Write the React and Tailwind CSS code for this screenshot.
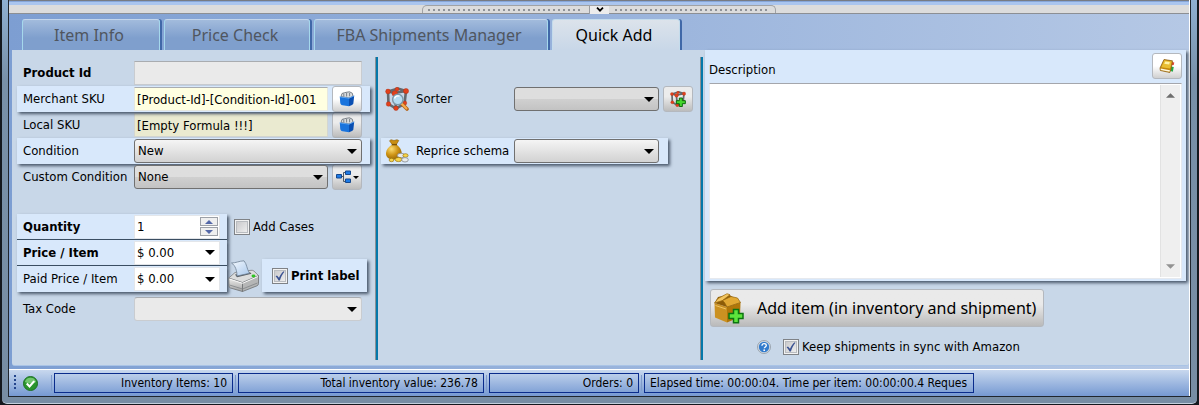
import React, { useState } from "react";

const glow = "bg-[#d8e8fb] shadow-[2px_2px_3px_rgba(40,55,75,0.8)]";
const raised =
  "flex h-[26px] w-[30px] shrink-0 items-center justify-center rounded-[3px] border border-[#b4b8be]";
const raisedDim = raised + " bg-linear-to-b from-[#ececec] from-40% to-[#bcbcbc]";
const raisedLit = raised + " bg-linear-to-b from-white from-50% to-[#d0d0d0]";

function Arrow({ className }) {
  return (
    <svg viewBox="0 0 10 5" className={"h-[5px] w-[10px] " + className} aria-hidden="true">
      <path d="M0 0h10L5 5z" fill="#000" />
    </svg>
  );
}

function Combo({ id, label, value, lit, flat, className }) {
  const skin = flat
    ? "border-[#c9ccd0] border-t-[#a9acb0] bg-[#eaeaea]"
    : lit
      ? "border-[#707070] bg-linear-to-b from-[#f5f5f5] to-[#d2d2d2]"
      : "border-[#707070] bg-linear-to-b from-[#dedede] from-50% via-[#d0d0d0] via-50% to-[#c3c3c3]";
  return (
    <div className={"relative shrink-0 " + className}>
      <select
        id={id}
        aria-label={label}
        className={"block h-6 w-full appearance-none rounded-[3px] border pl-[3px] pr-6 pb-px outline-none " + skin}
      >
        <option>{value}</option>
      </select>
      <Arrow className="pointer-events-none absolute top-[10px] right-[5px]" />
    </div>
  );
}

function Check({ label, checked, bold }) {
  const [on, setOn] = useState(checked);
  return (
    <label className={"flex items-center gap-[3px] whitespace-nowrap " + (bold ? "font-bold" : "")}>
      <span className="relative block size-4">
        <input
          type="checkbox"
          checked={on}
          onChange={(e) => setOn(e.target.checked)}
          className="block size-4 appearance-none border border-[#7f8286] bg-linear-to-br from-[#c4c4c6] to-[#f4f4f4] shadow-[inset_0_0_0_1px_#f2f2f2,inset_0_0_0_2px_#b9bcc0]"
        />
        {on && (
          <svg viewBox="0 0 16 16" className="pointer-events-none absolute top-0 left-0 size-4" aria-hidden="true">
            <path d="M3.6 8.2 5 7.4l2 2.4c1-2.700 2.600-5 4.700-6.600l.7.5C10.300 6.400 9 9 7.900 12.600H6.500C5.700 10.700 4.800 9.300 3.600 8.200z" fill="#3a5292" />
          </svg>
        )}
      </span>
      {label}
    </label>
  );
}

function Bucket() {
  return (
    <svg viewBox="0 0 16 16" className="size-4" aria-hidden="true">
      <path d="M2 5.500 3 2.500l2.500-.8L8 1.200l2.500-.4 2.800 1.400L14 5.500 10 7z" fill="#d9dcdf" stroke="#6f767e" strokeWidth=".9" />
      <path d="M4.800 2.500v3M7.600 2v3.500M10.600 1.800v3.500" stroke="#6f767e" strokeWidth=".9" />
      <path d="M.8 5.800 10 7.200v8L3.500 14.300C2 14 1.300 13 1.200 11.500z" fill="#1a74dd" />
      <path d="m10 7.200 5.200-2.400-.8 7.200c-.1 1-.5 1.500-1.400 1.900L10 15.200z" fill="#0a4fb2" />
      <path d="M.8 5.800 10 7.200l5.200-2.400" fill="none" stroke="#5aa4f2" strokeWidth=".9" />
    </svg>
  );
}

function Molecule({ plus, className }) {
  return (
    <svg viewBox="0 0 24 24" className={className} aria-hidden="true">
      <path d="M3 4.500 9.500 6 21 4l-1.500 13L11 21.500 3.500 17zM3 4.500l10-3 8 2.500M9.500 6 11 21" fill="none" stroke="#64696f" strokeWidth="2.600" />
      <g fill="#e2401c" stroke="#a62c10" strokeWidth=".4">
        <circle cx="3" cy="4.500" r="2.400" />
        <circle cx="12" cy="2.300" r="2" />
        <circle cx="9.800" cy="6.500" r="2.800" />
        <circle cx="21" cy="4" r="2.600" />
        <circle cx="3.500" cy="17" r="2.300" />
        <circle cx="11" cy="21.300" r="2.300" />
        <circle cx="19.800" cy="16" r="2" />
      </g>
      {plus ? (
        <path d="M14 10.500h4.500v4H23V19h-4.500v4.300H14V19H9.500v-4.500H14z" fill="#44d62c" stroke="#0b6a0b" strokeWidth="1.500" />
      ) : (
        <>
          <path d="m16.500 16.500 5.500 5.500" stroke="#b3641c" strokeWidth="3.600" strokeLinecap="round" />
          <path d="m16.500 16.500 5 5" stroke="#f7ac4e" strokeWidth="2" strokeLinecap="round" />
          <circle cx="12.800" cy="12.500" r="5.200" fill="#b5dcf2" stroke="#7d97a8" strokeWidth="1.400" />
          <path d="M9.500 11.500c.6-2 2.600-3 5-2.400" fill="none" stroke="#fff" strokeWidth="1.400" />
        </>
      )}
    </svg>
  );
}

function MoneyBag() {
  return (
    <svg viewBox="0 0 24 24" className="size-6 shrink-0" aria-hidden="true">
      <defs>
        <radialGradient id="bag" cx=".35" cy=".3" r=".8">
          <stop offset="0" stopColor="#fbdc72" />
          <stop offset=".5" stopColor="#cf9516" />
          <stop offset="1" stopColor="#8a5c05" />
        </radialGradient>
      </defs>
      <path d="M6 .7 9 1.500l3-.8 1.800.8-2.600 4.200H7.400L4.500 1.800z" fill="#c98e12" stroke="#8a5c05" strokeWidth=".6" />
      <path d="M7.300 5.500h4.200c4 3 6.200 7.400 4.800 11.300-1 3-4.300 4-7.500 3.800C3.500 20.500.8 18 1 14c.2-3.400 2.800-6.500 6.300-8.500z" fill="url(#bag)" />
      <path d="M6.800 5.600h5.200" stroke="#7b5204" strokeWidth="1.400" />
      <ellipse cx="16" cy="16.500" rx="3.600" ry="2.300" fill="#e9ebec" stroke="#84898d" strokeWidth=".8" />
      <ellipse cx="20.500" cy="16.500" rx="2.600" ry="1.800" fill="#f6d54b" stroke="#9c7307" strokeWidth=".7" />
      <ellipse cx="13.500" cy="20.500" rx="3.400" ry="2.100" fill="#f6d54b" stroke="#9c7307" strokeWidth=".7" />
      <ellipse cx="20" cy="20.800" rx="3.300" ry="2.200" fill="#e9ebec" stroke="#84898d" strokeWidth=".8" />
      <ellipse cx="6.500" cy="21" rx="2.400" ry="1.700" fill="#f6d54b" stroke="#9c7307" strokeWidth=".7" />
    </svg>
  );
}

function Printer() {
  return (
    <svg viewBox="0 0 32 32" className="size-8 shrink-0" aria-hidden="true">
      <defs>
        <linearGradient id="shell" x1="0" y1="0" x2="0" y2="1">
          <stop offset="0" stopColor="#ededec" />
          <stop offset="1" stopColor="#a3a3a3" />
        </linearGradient>
        <linearGradient id="sheet" x1="0" y1="0" x2="1" y2="1">
          <stop offset="0" stopColor="#f4f9fe" />
          <stop offset="1" stopColor="#a9c8ec" />
        </linearGradient>
      </defs>
      <path d="M.8 18 14.500 22.500V31.500L2.500 28Q1 27.500 1 26z" fill="url(#shell)" stroke="#6d7072" strokeWidth=".8" />
      <path d="m14.500 22.500 16-7v8q0 1.600-1.500 2.300L14.500 31.500z" fill="#b5b6b6" stroke="#6d7072" strokeWidth=".8" />
      <path d="M.8 18 7 12.500l16-2.200q2-.2 3 .8l4.500 4.400-16 7z" fill="#dcdddd" stroke="#7c7f81" strokeWidth=".8" />
      <path d="m7 14.500 15-2.200 1.500 1.500-14.500 3.400z" fill="#54585c" />
      <path d="M3.500 3C8 3 11 1 16 .8c3 3.500 2.500 7.500 5.500 12.500L9 16C9 11 7.500 5.500 3.500 3z" fill="url(#sheet)" stroke="#6f8296" strokeWidth=".8" />
      <path d="m1.500 25 13 4 15-6" fill="none" stroke="#86898b" strokeWidth=".9" />
      <path d="m1.500 19 13 4.300L30 16.500" fill="none" stroke="#fafafa" strokeWidth="1" />
      <ellipse cx="25.500" cy="16" rx="2" ry="1.400" fill="#2fc522" />
    </svg>
  );
}

function Parcel() {
  return (
    <svg viewBox="0 0 32 32" className="size-8 shrink-0" aria-hidden="true">
      <path d="M1.500 11 14 15v15.500L2 25.500z" fill="#cb9121" />
      <path d="m14 15 13.500-4.500-.5 14.500L14 30.500z" fill="#b07609" />
      <path d="m1.500 11 3.500-6 11-2.500 11.500 8L14 15z" fill="#8d5c07" />
      <path d="m5 6.500 9-4.800 3 1L9.500 8.500 1.500 11z" fill="#f3c55e" stroke="#9b6a10" strokeWidth=".7" />
      <path d="m9.500 8.500 8.500-4 6.500 1.500 3 4.500L14 15l-2.500-4.500z" fill="#e1a833" stroke="#93640c" strokeWidth=".7" />
      <path d="m2.500 13.500 10.500 3.500" stroke="#f0c566" strokeWidth="1" />
      <path d="M20.500 17.500h5v4h4.500v5h-4.500v4.300h-5v-4.300H16v-5h4.500z" fill="#5de43c" stroke="#0c7410" strokeWidth="1.500" />
    </svg>
  );
}

function Book() {
  return (
    <svg viewBox="0 0 16 16" className="size-4" aria-hidden="true">
      <path d="m13 4 2.300.6-.6 2.400-2 .2z" fill="#df4732" />
      <path d="m12 8.500 2.800.6-1 4.700-2.300-.9z" fill="#24a745" />
      <path d="M5 1.500 13.500 2.800 12 11 10.800 14.500 1.300 12.500 1 10z" fill="#c4880c" stroke="#86580b" strokeWidth=".7" />
      <path d="M5.300 2.300 12.700 3.400l-1.600 7L2.300 9.200z" fill="#e9be32" />
      <path d="m6.300 3.400 4.500.6-.6 2.400-5-.6z" fill="#fff2a8" />
      <path d="M1.600 10.600 11 12.200l-.5 1.500-8.700-1.600z" fill="#fff8de" />
    </svg>
  );
}

function Nodes() {
  return (
    <svg viewBox="0 0 16 14" className="h-[14px] w-4" aria-hidden="true">
      <path d="M5 6.500h3M7.500 2.500v9M7.500 2.500H10M7.500 11.500H10" fill="none" stroke="#4d5865" strokeWidth="1" />
      <g fill="#1e7be6" stroke="#15498f" strokeWidth="1">
        <path d="M.5 4.500h5v3.500h-5zM9.500 1h5v3.500h-5zM9.500 9h5v3.500h-5z" />
      </g>
    </svg>
  );
}

function Row({ id, label, lit, bold, ruled, wide = true, children }) {
  return (
    <div
      className={
        "flex h-[26px] items-center pl-[6px] " +
        (wide ? "w-[353px] " : "w-[210px] ") +
        (ruled ? "border-b border-[#3c5064] " : "") +
        (lit ? "relative " + glow : "")
      }
    >
      <label htmlFor={id} className={"w-[111px] shrink-0 whitespace-nowrap " + (bold ? "font-bold" : "")}>
        {label}
      </label>
      {children}
    </div>
  );
}

function MoneyBox({ id, label }) {
  return (
    <div className="flex h-6 w-[86px] items-center border border-[#e3e6ea] bg-white pr-[4px]">
      <input id={id} defaultValue="$ 0.00" className="w-full min-w-0 bg-transparent pl-[2px] outline-none" />
      <button type="button" aria-label={label} className="flex h-5 items-center">
        <Arrow className="" />
      </button>
    </div>
  );
}

function Divider() {
  return <div className="w-[3px] shrink-0 self-stretch border-l border-[#8b9095] bg-[#0478aa]" />;
}

const tabs = [
  ["Item Info", "w-[138px]"],
  ["Price Check", "w-[146px]"],
  ["FBA Shipments Manager", "w-[234px]"],
  ["Quick Add", "w-[128px]"],
];

const stats = [
  ["Inventory Items: 10", "w-[179px] justify-end"],
  ["Total inventory value: 236.78", "w-[246px] justify-end"],
  ["Orders: 0", "w-[150px] justify-end"],
  ["Elapsed time: 00:00:04. Time per item: 00:00:00.4 Reques", "w-[330px]"],
];

function Dots() {
  return <span className="h-[2px] flex-1 bg-[repeating-linear-gradient(90deg,#8e9298_0_2px,transparent_2px_5px)]" />;
}

export default function App() {
  const [tab, setTab] = useState("Quick Add");
  return (
    <div className="bg-[#14181e] px-[2px] pb-px font-['DejaVu_Sans_Condensed','DejaVu_Sans',sans-serif] text-[13px] leading-4 text-black">
      <div className="rounded-b-[5px] border-b border-[#c3d0dd] bg-linear-to-b from-[#8fb0d2] via-[#7890a8] via-20% to-[#778da4] px-[6px] pb-[6px]">
        <div className="border-x border-b border-[#20262e]">
          <div className="border-r border-white bg-linear-to-r from-[#7d9ed2] to-[#b5c8e5]">
            <div className="flex h-[5px] flex-col border-t border-[#777b83] bg-[#86a6d9]">
              <div className="mt-px h-[3px] bg-[#aac5ee]" />
            </div>
            <div className="flex h-[9px] justify-center border-b border-[#8c8f94] bg-[#dcdcdc]">
              <div className="flex h-2 w-[354px] items-center gap-[6px] rounded-t-[5px] border border-b-0 border-[#a0a2a5] px-[5px]">
                <Dots />
                <button type="button" aria-label="Collapse panel" className="flex h-2 w-5 items-center justify-center border-l border-[#9a9ca0] bg-[#ececec]">
                  <svg viewBox="0 0 8 5" className="h-[5px] w-2" aria-hidden="true">
                    <path d="m1 .7 3 3 3-3" fill="none" stroke="#000" strokeWidth="1.700" />
                  </svg>
                </button>
                <Dots />
              </div>
            </div>

            <div className="pb-[3px] pl-[3px]">
              <div role="tablist" className="flex gap-1 pt-[5px] pl-[10px] font-['Noto_Sans',sans-serif] text-[16px]">
                {tabs.map(([name, width]) => (
                  <button
                    key={name}
                    type="button"
                    role="tab"
                    aria-selected={tab === name}
                    onClick={() => setTab(name)}
                    className={
                      "h-[31px] rounded-t-[3px] border-x border-t pr-1 whitespace-nowrap shadow-[2px_0_0_#4068a8] " +
                      width +
                      (tab === name
                        ? " border-[#c4dcec] bg-linear-to-b from-[#dce3eb] to-[#c8d7e8] text-black"
                        : " border-[#a5d8ec] border-t-[#c4d6ec] bg-linear-to-b from-[#a2bbdc] to-[#7f9fcd] to-60% text-[#50565f]")
                    }
                  >
                    {name}
                  </button>
                ))}
              </div>

              <main className="flex rounded-b-[3px] border-b border-[#a9c3e6] bg-[#c8d7e8] pb-[5px]">
                <form className="w-[363px] shrink-0 pt-[10px] pl-[5px]" onSubmit={(e) => e.preventDefault()}>
                  <Row id="pid" label="Product Id" bold>
                    <input id="pid" className="h-6 w-[228px] border border-[#c9ccd0] border-t-[#a9acb0] bg-[#eaeaea] px-[3px]" />
                  </Row>
                  <Row id="msku" label="Merchant SKU" lit>
                    <input id="msku" defaultValue="[Product-Id]-[Condition-Id]-001" className="mr-1 h-6 w-[194px] border border-[#e5e7e0] border-t-[#a9acb0] bg-[#ffffe1] px-[2px]" />
                    <button type="button" aria-label="Merchant SKU formula" className={raisedLit}><Bucket /></button>
                  </Row>
                  <Row id="lsku" label="Local SKU">
                    <input id="lsku" defaultValue="[Empty Formula !!!]" className="mr-1 h-6 w-[194px] border border-[#d4d6d0] bg-[#eaead0] px-[2px]" />
                    <button type="button" aria-label="Local SKU formula" className={raisedDim}><Bucket /></button>
                  </Row>
                  <Row id="cond" label="Condition" lit>
                    <Combo id="cond" value="New" lit className="w-[228px]" />
                  </Row>
                  <Row id="ccond" label="Custom Condition">
                    <Combo id="ccond" value="None" className="mr-1 w-[194px]" />
                    <button type="button" aria-label="Condition tree" className={raisedDim}>
                      <Nodes />
                      <svg viewBox="0 0 6 3" className="ml-px h-[3px] w-[6px]" aria-hidden="true"><path d="M0 0h6L3 3z" /></svg>
                    </button>
                  </Row>

                  <div className="mt-6 flex">
                    <div className="w-[210px] shrink-0">
                      <Row id="qty" label="Quantity" lit bold ruled wide={false}>
                        <div className="flex h-6 w-[86px] items-center border border-[#e3e6ea] bg-white">
                          <input id="qty" defaultValue="1" className="w-full min-w-0 bg-transparent pl-[2px] outline-none" />
                          <div className="flex shrink-0 flex-col gap-px pr-px">
                            <button type="button" aria-label="More" className="flex h-[9px] w-[18px] items-center justify-center border border-[#9da1a8] bg-[#efefef]">
                              <svg viewBox="0 0 8 4" className="h-1 w-2"><path d="m4 0 4 4H0z" fill="#5468a8" /></svg>
                            </button>
                            <button type="button" aria-label="Less" className="flex h-[9px] w-[18px] items-center justify-center border border-[#9da1a8] bg-[#efefef]">
                              <svg viewBox="0 0 8 4" className="h-1 w-2"><path d="M0 0h8L4 4z" fill="#5468a8" /></svg>
                            </button>
                          </div>
                        </div>
                      </Row>
                      <Row id="price" label="Price / Item" lit bold ruled wide={false}>
                        <MoneyBox id="price" label="Price list" />
                      </Row>
                      <Row id="paid" label="Paid Price / Item" lit wide={false}>
                        <MoneyBox id="paid" label="Paid price list" />
                      </Row>
                    </div>
                    <div className="flex flex-1 flex-col justify-between pt-[5px]">
                      <div className="pl-[7px]"><Check label="Add Cases" checked={false} /></div>
                      <div className="relative flex items-center gap-[2px] pl-px">
                        <Printer />
                        <div className={"flex h-[33px] w-[105px] items-center pl-[10px] " + glow}>
                          <Check label="Print label" checked bold />
                        </div>
                      </div>
                    </div>
                  </div>
                  <div className="mt-1">
                    <Row id="tax" label="Tax Code">
                      <Combo id="tax" value="" flat className="w-[228px]" />
                    </Row>
                  </div>
                </form>

                <div className="flex pt-[7px]"><Divider /></div>

                <section className="flex w-[322px] shrink-0 flex-col gap-[26px] pt-9 pl-[3px]">
                  <div className="flex h-[26px] items-center pl-1">
                    <Molecule className="mr-[7px] size-6 shrink-0" />
                    <label htmlFor="sorter" className="w-[98px]">Sorter</label>
                    <Combo id="sorter" value="" className="w-[145px]" />
                    <button type="button" aria-label="Add sorter" className={raisedDim + " ml-1"}>
                      <Molecule plus className="size-4" />
                    </button>
                  </div>
                  <div className={"flex h-[26px] w-[287px] items-center pl-1 " + glow}>
                    <span className="mr-[7px] flex"><MoneyBag /></span>
                    <label htmlFor="schema" className="w-[98px] whitespace-nowrap">Reprice schema</label>
                    <Combo id="schema" value="" lit className="w-[145px]" />
                  </div>
                </section>

                <div className="flex pt-[7px]"><Divider /></div>

                <section className="min-w-0 flex-1 pr-[3px] pl-[2px]">
                  <div className={"flex h-[231px] flex-col px-1 pt-[3px] pb-[2px] " + glow}>
                    <div className="flex items-center justify-between pb-1">
                      <label htmlFor="desc" className="pt-2">Description</label>
                      <button type="button" aria-label="Description notes" className={raisedLit}><Book /></button>
                    </div>
                    <div className="flex flex-1 border border-[#e6e9ee] border-t-[#a4a6ac] bg-white p-px">
                      <textarea id="desc" className="min-w-0 flex-1 resize-none bg-white p-1 outline-none" />
                      <div className="flex w-5 flex-col items-center justify-between border-l border-[#e2e2e2] bg-[#efefef] py-2">
                        <button type="button" aria-label="Scroll up"><svg viewBox="0 0 8 4" className="block h-[5px] w-[9px]"><path d="m4 0 4 4H0z" fill="#6e6e6e" /></svg></button>
                        <button type="button" aria-label="Scroll down"><svg viewBox="0 0 8 4" className="block h-[5px] w-[9px]"><path d="M0 0h8L4 4z" fill="#929292" /></svg></button>
                      </div>
                    </div>
                  </div>
                  <button type="button" className="mt-2 ml-[5px] flex h-[38px] w-[334px] items-center gap-3 rounded-[3px] border border-[#b4b8be] bg-linear-to-b from-[#eaeaea] from-40% to-[#bababa] pl-[2px] font-['Noto_Sans',sans-serif] text-[16px] whitespace-nowrap">
                    <Parcel />
                    Add item (in inventory and shipment)
                  </button>
                  <div className="mt-3 flex items-center gap-3 pb-[5px] pl-[52px]">
                    <svg viewBox="0 0 14 14" className="size-[14px]" role="img" aria-label="Help">
                      <circle cx="7" cy="7" r="6.500" fill="#d7dde4" stroke="#8d979f" strokeWidth=".8" />
                      <circle cx="7" cy="7" r="5.200" fill="#337ccd" />
                      <path d="M4.900 5.700c0-1.400 1-2.100 2.200-2.100s2.200.7 2.200 1.800c0 1.500-2 1.500-2 2.900" fill="none" stroke="#fff" strokeWidth="1.300" />
                      <circle cx="7.200" cy="10.200" r=".9" fill="#fff" />
                    </svg>
                    <Check label="Keep shipments in sync with Amazon" checked />
                  </div>
                </section>
              </main>
            </div>

            <footer className="flex h-[27px] items-center border-t border-white bg-linear-to-b from-[#c8d8ee] to-[#7699d2] pl-[5px] text-[12px]">
              <span className="mr-[7px] h-4 w-[2px] bg-[repeating-linear-gradient(180deg,#24458c_0_2px,transparent_2px_4px)]" />
              <svg viewBox="0 0 16 16" className="size-[15px] shrink-0" role="img" aria-label="Ready">
                <circle cx="8" cy="8" r="7.500" fill="#2a942d" stroke="#1c6e20" />
                <path d="M2 6.500a6.200 6.200 0 0 1 12 0C10.500 8.500 5.500 8.500 2 6.500z" fill="#72c66e" />
                <path d="m4 8 3 3.200 5-5.700" fill="none" stroke="#fff" strokeWidth="2.300" />
              </svg>
              <div className="ml-[11px] flex min-w-0">
                {stats.map(([text, cls]) => (
                  <div key={text} className="flex items-center">
                    <span className="mx-[2px] h-4 w-px bg-[#7f9bcb]" />
                    <div className={"flex h-5 items-center overflow-hidden border border-[#0a2c8c] px-[5px] whitespace-nowrap " + cls}>
                      {text}
                    </div>
                  </div>
                ))}
              </div>
            </footer>
          </div>
        </div>
      </div>
    </div>
  );
}
